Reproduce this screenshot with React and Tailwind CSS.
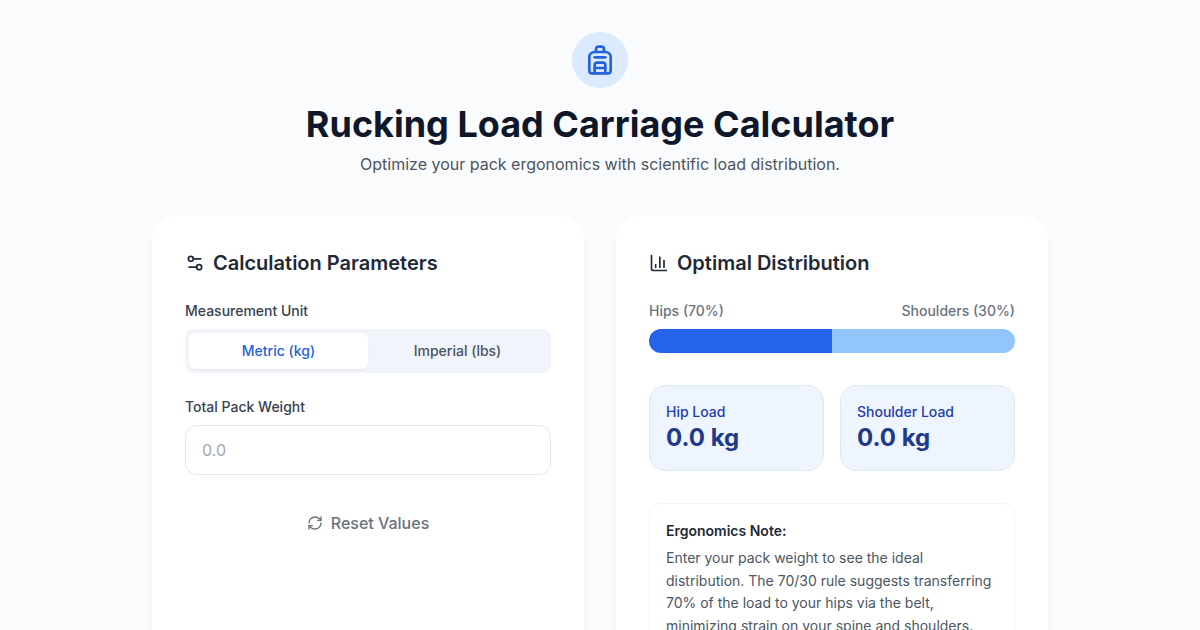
import { useState } from 'react'
import { Backpack, ChartColumn, RefreshCw, Settings2 } from 'lucide-react'

const HIP_SHARE = 0.7

const UNITS = [
  { id: 'kg', label: 'Metric (kg)' },
  { id: 'lbs', label: 'Imperial (lbs)' }
]

/** White rounded panel with an icon heading */
function Panel({ icon: Icon, title, children }) {
  return (
    <section className="rounded-3xl border border-white bg-white p-8 shadow-[0_4px_8px_rgba(15,23,42,0.03)]">
      <h2 className="mb-6 flex items-center gap-2 text-xl font-semibold text-[#1f2937]">
        <Icon className="size-5" aria-hidden="true" />
        {title}
      </h2>
      {children}
    </section>
  )
}

/** Single load figure */
function LoadCard({ label, value, unit }) {
  return (
    <div className="rounded-2xl border border-[#dfe8f5] bg-[#eff5ff] p-4">
      <p className="text-sm font-medium text-[#1e40af]">{label}</p>
      <p className="text-2xl font-bold text-[#1e3a8a]">{value.toFixed(1)} {unit}</p>
    </div>
  )
}

export default function App() {
  const [unit, setUnit] = useState('kg')
  const [weight, setWeight] = useState('')

  const total = parseFloat(weight) || 0

  function reset() {
    setUnit('kg')
    setWeight('')
  }

  return (
    <div className="min-h-screen bg-[#fafbfd] px-4 py-8 font-[Inter,sans-serif]">
      <main className="mx-auto max-w-4xl">
        <header className="mb-10 flex flex-col items-center text-center">
          <div className="mb-4 rounded-full bg-[#dbeafe] p-3 text-[#2563d8]">
            <Backpack className="size-8" aria-hidden="true" />
          </div>
          <h1 className="text-4xl font-bold text-[#0f172a]">Rucking Load Carriage Calculator</h1>
          <p className="mt-2 text-[#4b5563]">Optimize your pack ergonomics with scientific load distribution.</p>
        </header>

        <div className="grid gap-8 md:grid-cols-2">
          <Panel icon={Settings2} title="Calculation Parameters">
            <div className="space-y-6">
              <div role="group" aria-labelledby="unit-label">
                <p id="unit-label" className="mb-2 text-sm font-medium text-[#374151]">Measurement Unit</p>
                <div className="flex rounded-lg bg-[#f1f4fa] p-1">
                  {UNITS.map(({ id, label }) => (
                    <button
                      key={id}
                      type="button"
                      aria-pressed={unit === id}
                      onClick={() => setUnit(id)}
                      className={`flex-1 rounded-md py-2 text-sm font-medium ${
                        unit === id
                          ? 'bg-white text-[#2563d8] shadow-[0_1px_2px_rgba(0,0,0,0.05)]'
                          : 'text-[#4b5563]'
                      }`}
                    >
                      {label}
                    </button>
                  ))}
                </div>
              </div>

              <div>
                <label htmlFor="weight" className="mb-2 block text-sm font-medium text-[#374151]">
                  Total Pack Weight
                </label>
                <input
                  id="weight"
                  type="text"
                  inputMode="decimal"
                  placeholder="0.0"
                  value={weight}
                  onChange={(e) => setWeight(e.target.value)}
                  className="w-full rounded-xl border border-[#e5e7eb] bg-white px-4 py-3 text-[#111827] outline-none placeholder:text-[#a3a6ab] focus:border-blue-500"
                />
              </div>

              <button
                type="button"
                onClick={reset}
                className="flex w-full items-center justify-center gap-2 py-3 font-medium text-[#6b7280]"
              >
                <RefreshCw className="size-4" aria-hidden="true" />
                Reset Values
              </button>
            </div>
          </Panel>

          <Panel icon={ChartColumn} title="Optimal Distribution">
            <div className="mb-2 flex justify-between text-sm font-medium text-[#6b7280]">
              <span>Hips (70%)</span>
              <span>Shoulders (30%)</span>
            </div>
            <div className="mb-8 flex h-6 overflow-hidden rounded-full">
              <div className="flex-1 bg-[#2563eb]" />
              <div className="flex-1 bg-[#93c5fd]" />
            </div>

            <div className="mb-8 grid grid-cols-2 gap-4">
              <LoadCard label="Hip Load" value={total * HIP_SHARE} unit={unit} />
              <LoadCard label="Shoulder Load" value={total * (1 - HIP_SHARE)} unit={unit} />
            </div>

            <div className="rounded-xl border border-[#f3f4f6] p-4 text-sm leading-relaxed text-[#4b5563]">
              <p className="mb-1 font-semibold text-[#1f2937]">Ergonomics Note:</p>
              <p>
                Enter your pack weight to see the ideal distribution. The 70/30 rule suggests transferring 70% of
                the load to your hips via the belt, minimizing strain on your spine and shoulders.
              </p>
            </div>
          </Panel>
        </div>
      </main>
    </div>
  )
}
